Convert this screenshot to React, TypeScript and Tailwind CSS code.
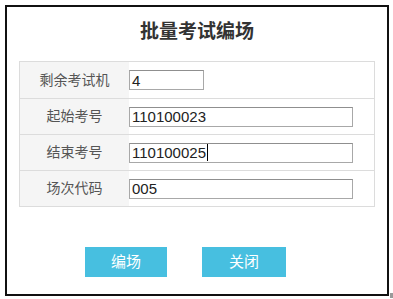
const font = { fontFamily: '"Liberation Sans", "Noto Sans CJK SC", sans-serif' };

const rows = [
  { label: '剩余考试机', value: '4', short: true },
  { label: '起始考号', value: '110100023' },
  { label: '结束考号', value: '110100025', caret: true },
  { label: '场次代码', value: '005' },
];

export default function App() {
  return (
    <div className="relative w-[393px] h-[299px] bg-white" style={font}>
      <div className="absolute left-[5px] top-[5px] w-[384px] h-[291px] border-2 border-[#111] flex flex-col">
        <h1 className="mt-[12px] h-[26px] leading-[26px] text-center text-[19px] font-bold text-[#333]">
          批量考试编场
        </h1>

        {/* form table */}
        <div className="mt-[16px] mx-[12px] border border-[#dcdcdc]">
          {rows.map((r, i) => (
            <div key={i} className={`flex h-[36px] ${i > 0 ? 'border-t border-[#dcdcdc]' : ''}`}>
              <div className="w-[109px] bg-[#f5f5f5] flex items-center justify-center text-[14px] text-[#555]">
                {r.label}
              </div>
              <div className="flex-1 flex items-center">
                <div
                  className={`h-[20px] border border-[#a8a8a8] border-t-[#8f8f8f] flex items-center pl-[2px] text-[15px] text-[#222] leading-none ${
                    r.short ? 'w-[75px]' : 'w-[224px]'
                  }`}
                >
                  {r.value}
                  {r.caret && <span className="inline-block w-px h-[17px] bg-black ml-px" />}
                </div>
              </div>
            </div>
          ))}
        </div>

        <div className="mt-[40px] ml-[78px] flex gap-[35px]">
          <button className="w-[82px] h-[30px] bg-[#47bfe0] text-white text-[15px]">编场</button>
          <button className="w-[84px] h-[30px] bg-[#47bfe0] text-white text-[15px]">关闭</button>
        </div>
      </div>
      <div className="absolute left-[390px] top-[293px] w-[3px] h-[5px] bg-[#9a9a9a]" />
    </div>
  );
}
